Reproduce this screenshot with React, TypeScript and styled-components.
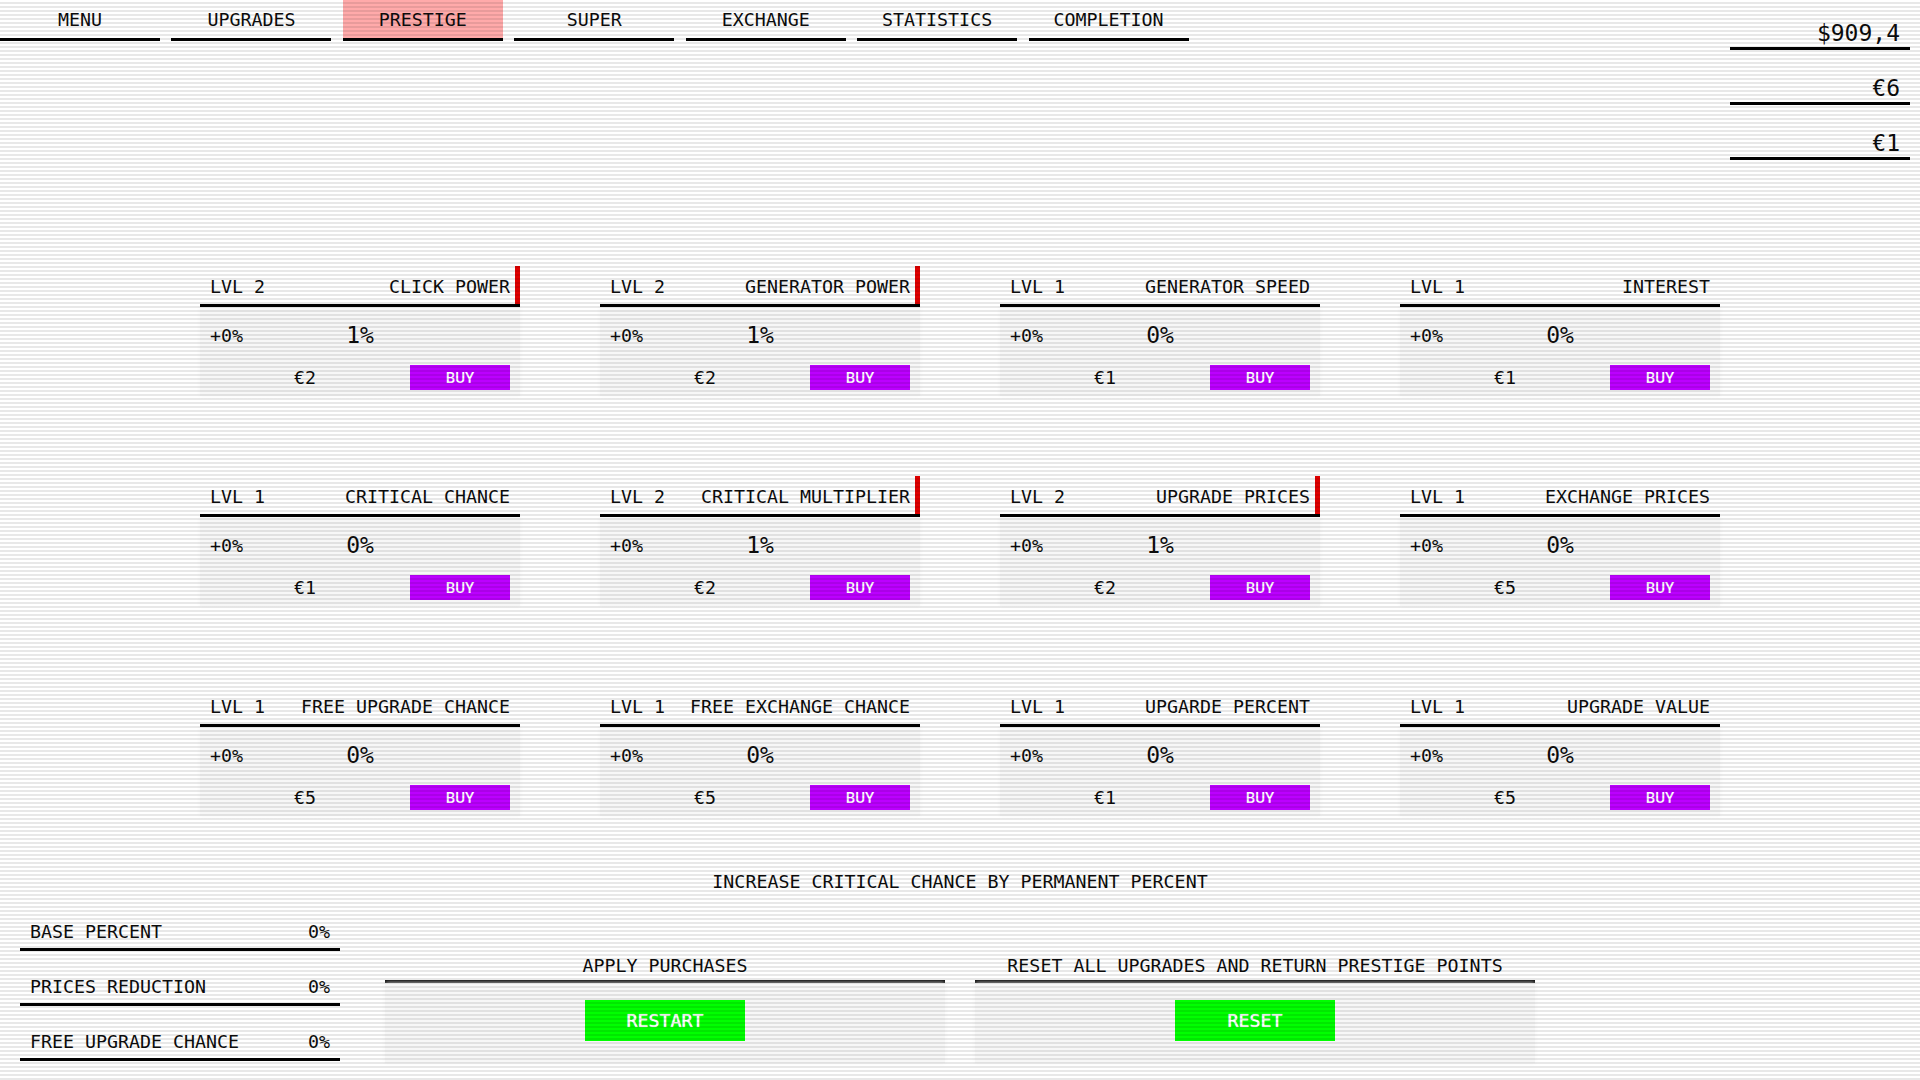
import React, { FunctionComponent } from 'react'
import styled, { createGlobalStyle } from 'styled-components'

const GlobalStyle = createGlobalStyle`
	html, body {
		margin: 0;
		padding: 0;
		background: #fff;
		color: #0c0c0c;
		font-family: 'DejaVu Sans Mono', 'Liberation Mono', monospace;
		font-size: 18.3px;
	}
`

const Page = styled.div`
	position: relative;
	width: 1920px;
	height: 1080px;
	overflow: hidden;
`

const Scanlines = styled.div`
	position: absolute;
	inset: 0;
	pointer-events: none;
	background: repeating-linear-gradient(
		to bottom,
		rgba(0, 0, 0, 0) 0,
		rgba(0, 0, 0, 0) 2px,
		rgba(0, 0, 0, 0.09) 2px,
		rgba(0, 0, 0, 0.09) 4px
	);
`

const Top = styled.header`
	display: flex;
	justify-content: space-between;
	align-items: flex-start;
	height: 266px;
`

const Nav = styled.nav`
	display: flex;
	gap: 11.43px;
`

const Tab = styled.div<{ $active?: boolean }>`
	box-sizing: border-box;
	width: 160px;
	height: 41px;
	padding-top: 8px;
	text-align: center;
	line-height: 24px;
	border-bottom: 3px solid #000;
	background: ${p => (p.$active ? '#ffaaaa' : 'transparent')};
`

const Wallet = styled.div`
	display: flex;
	flex-direction: column;
	gap: 5px;
	width: 180px;
	margin-right: 10px;
`

const WalletRow = styled.div`
	box-sizing: border-box;
	height: 50px;
	padding: 19px 10px 0 0;
	text-align: right;
	font-size: 23px;
	line-height: 28px;
	border-bottom: 3px solid #000;
`

const Grid = styled.main`
	display: grid;
	grid-template-columns: repeat(4, 320px);
	column-gap: 80px;
	row-gap: 80px;
	margin-left: 200px;
`

const Card = styled.section`
	height: 130px;
`

const CardHead = styled.div<{ $flag?: boolean }>`
	position: relative;
	box-sizing: border-box;
	display: flex;
	justify-content: space-between;
	align-items: center;
	height: 41px;
	padding: 3px 10px 0;
	border-bottom: 3px solid #000;
	&::after {
		content: '';
		display: ${p => (p.$flag ? 'block' : 'none')};
		position: absolute;
		top: 0;
		right: 0;
		bottom: 0;
		width: 5px;
		background: #e00000;
	}
`

const CardBody = styled.div`
	height: 89px;
	background: #f7f7f7;
	box-shadow: 0 0 5px #f7f7f7;
`

const ValueRow = styled.div`
	display: grid;
	grid-template-columns: 1fr auto 1fr;
	align-items: center;
	height: 56px;
	margin-bottom: 2px;
	padding: 0 10px;
`

const Value = styled.span`
	font-size: 23px;
`

const PriceRow = styled.div`
	display: flex;
	align-items: center;
	height: 25px;
	padding: 0 10px;
`

const Price = styled.span`
	flex: 1;
	margin-right: 10px;
	text-align: center;
`

const BuyButton = styled.button`
	width: 100px;
	height: 25px;
	padding: 0;
	border: 0;
	background: #bc00ff;
	color: #fff;
	font-family: 'Roboto', sans-serif;
	font-size: 15px;
	font-weight: 500;
`

const Description = styled.div`
	margin: 54px 0 7px;
	text-align: center;
	line-height: 24px;
`

const Bottom = styled.footer`
	display: flex;
	align-items: flex-start;
	padding-left: 20px;
`

const Totals = styled.div`
	display: flex;
	flex-direction: column;
	gap: 5px;
	width: 320px;
	margin-right: 45px;
`

const TotalRow = styled.div`
	box-sizing: border-box;
	display: flex;
	justify-content: space-between;
	align-items: flex-end;
	height: 50px;
	padding: 0 10px 6px;
	border-bottom: 3px solid #000;
`

const Action = styled.div`
	width: 560px;
	margin: 41px 30px 0 0;
`

const ActionHead = styled.div`
	box-sizing: border-box;
	height: 41px;
	padding-top: 12px;
	text-align: center;
	line-height: 24px;
	border-bottom: 3px solid #000;
`

const ActionBody = styled.div`
	box-sizing: border-box;
	display: flex;
	justify-content: center;
	align-items: flex-start;
	height: 80px;
	padding-top: 17px;
	background: #f7f7f7;
	box-shadow: 0 0 5px #f7f7f7;
`

const ActionButton = styled.button`
	width: 160px;
	height: 41px;
	padding: 0;
	border: 0;
	background: #00ff00;
	color: #fff;
	font-family: 'DejaVu Sans Mono', monospace;
	font-size: 18.3px;
	text-shadow: 0 0 1px #fff;
`

type Upgrade = {
	level: number
	name: string
	value: string
	price: string
}

const upgrades: Upgrade[] = [
	{ level: 2, name: 'CLICK POWER', value: '1%', price: '€2' },
	{ level: 2, name: 'GENERATOR POWER', value: '1%', price: '€2' },
	{ level: 1, name: 'GENERATOR SPEED', value: '0%', price: '€1' },
	{ level: 1, name: 'INTEREST', value: '0%', price: '€1' },
	{ level: 1, name: 'CRITICAL CHANCE', value: '0%', price: '€1' },
	{ level: 2, name: 'CRITICAL MULTIPLIER', value: '1%', price: '€2' },
	{ level: 2, name: 'UPGRADE PRICES', value: '1%', price: '€2' },
	{ level: 1, name: 'EXCHANGE PRICES', value: '0%', price: '€5' },
	{ level: 1, name: 'FREE UPGRADE CHANCE', value: '0%', price: '€5' },
	{ level: 1, name: 'FREE EXCHANGE CHANCE', value: '0%', price: '€5' },
	{ level: 1, name: 'UPGARDE PERCENT', value: '0%', price: '€1' },
	{ level: 1, name: 'UPGRADE VALUE', value: '0%', price: '€5' },
]

const tabs = ['MENU', 'UPGRADES', 'PRESTIGE', 'SUPER', 'EXCHANGE', 'STATISTICS', 'COMPLETION']

const UpgradeCard: FunctionComponent<{ upgrade: Upgrade }> = ({ upgrade }) => (
	<Card>
		<CardHead $flag={upgrade.level > 1}>
			<span>LVL {upgrade.level}</span>
			<span>{upgrade.name}</span>
		</CardHead>
		<CardBody>
			<ValueRow>
				<span>+0%</span>
				<Value>{upgrade.value}</Value>
			</ValueRow>
			<PriceRow>
				<Price>{upgrade.price}</Price>
				<BuyButton>BUY</BuyButton>
			</PriceRow>
		</CardBody>
	</Card>
)

const App: FunctionComponent = () => (
	<Page>
		<GlobalStyle />
		<Top>
			<Nav>
				{tabs.map(tab => (
					<Tab key={tab} $active={tab === 'PRESTIGE'}>{tab}</Tab>
				))}
			</Nav>
			<Wallet>
				<WalletRow>$909,4</WalletRow>
				<WalletRow>€6</WalletRow>
				<WalletRow>€1</WalletRow>
			</Wallet>
		</Top>
		<Grid>
			{upgrades.map(upgrade => (
				<UpgradeCard key={upgrade.name} upgrade={upgrade} />
			))}
		</Grid>
		<Description>INCREASE CRITICAL CHANCE BY PERMANENT PERCENT</Description>
		<Bottom>
			<Totals>
				<TotalRow><span>BASE PERCENT</span><span>0%</span></TotalRow>
				<TotalRow><span>PRICES REDUCTION</span><span>0%</span></TotalRow>
				<TotalRow><span>FREE UPGRADE CHANCE</span><span>0%</span></TotalRow>
			</Totals>
			<Action>
				<ActionHead>APPLY PURCHASES</ActionHead>
				<ActionBody><ActionButton>RESTART</ActionButton></ActionBody>
			</Action>
			<Action>
				<ActionHead>RESET ALL UPGRADES AND RETURN PRESTIGE POINTS</ActionHead>
				<ActionBody><ActionButton>RESET</ActionButton></ActionBody>
			</Action>
		</Bottom>
		<Scanlines />
	</Page>
)

export default App
